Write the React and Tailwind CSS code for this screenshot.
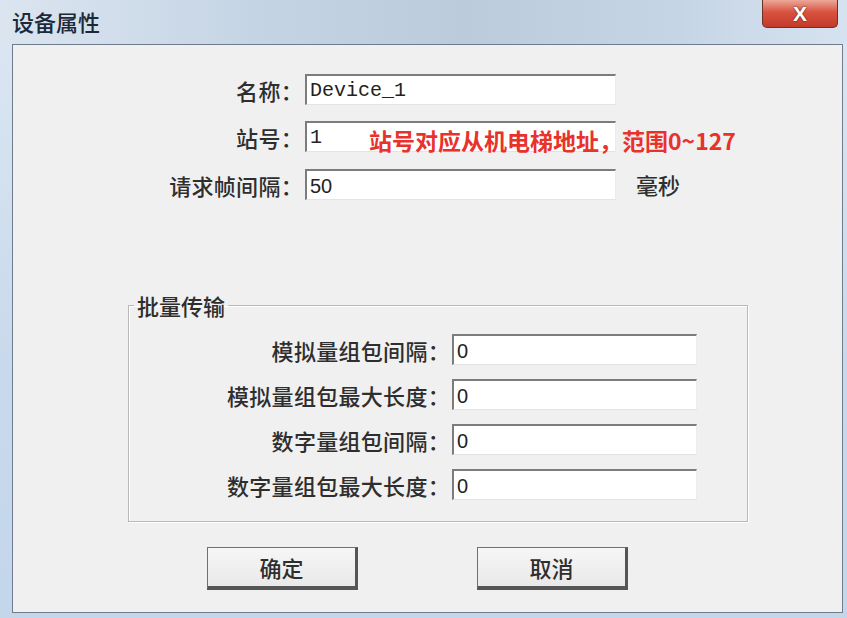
const cjk = { fontFamily: '"Noto Sans CJK SC", "Noto Sans", sans-serif' };

function Field({ value, mono, width = 'w-[311px]' }) {
  return (
    <div
      className={`${width} h-[31px] bg-white border-t-2 border-l-2 border-r border-b border-t-[#7c7c7c] border-l-[#7c7c7c] border-r-[#ececec] border-b-[#e4e4e4] flex items-center pl-[3px] pt-[2px] text-[20px] text-[#222]`}
      style={{ fontFamily: mono ? '"Liberation Mono", monospace' : '"Liberation Sans", sans-serif' }}
    >
      {value}
    </div>
  );
}

function Row({ label, labelWidth, children }) {
  return (
    <div className="flex items-center">
      <div className={`${labelWidth} text-right text-[22px] leading-[28px] tracking-[0.3px] text-[#2e2e2e] font-medium pr-[2px]`} style={cjk}>{label}</div>
      {children}
    </div>
  );
}

function Button({ children }) {
  return (
    <button
      className="w-[151px] h-[43px] bg-[linear-gradient(#f6f6f6,#e9e9e9)] border border-[#707070] border-r-[3px] border-b-[4px] border-r-[#555] border-b-[#555] text-[22px] font-medium text-[#2e2e2e]"
      style={cjk}
    >
      {children}
    </button>
  );
}

export default function App() {
  return (
    <div className="w-[847px] h-[618px] bg-[linear-gradient(180deg,#dce7f3,#c8d9eb_60%,#c4d6ea)] flex flex-col overflow-hidden">
      <div className="h-[44px] flex justify-between items-start pl-[12px] pr-[9px] bg-[linear-gradient(90deg,#dbe5f0,#c5d4e4_30%,#bccbdb_55%,#c6d5e6_80%,#d6e2ef)]">
        <div className="pt-[5px] text-[22px] text-[#1d2838] font-medium" style={cjk}>设备属性</div>
        <div
          className="w-[76px] h-[28px] rounded-b-[5px] border border-t-0 border-[#6b3328] bg-[linear-gradient(#eba898,#d9523f_45%,#c23a2a)] flex items-center justify-center text-white font-bold text-[21px] [text-shadow:0_0_2px_#5a1a10]"
          style={{ fontFamily: '"Liberation Sans", sans-serif' }}
        >
          X
        </div>
      </div>

      <div className="ml-[12px] mr-[4px] h-[569px] bg-[#f0f0f0] border border-[#6e7c8c] flex flex-col">
        <div className="pt-[29px] flex flex-col gap-[16px]">
          <Row label="名称：" labelWidth="w-[292px]">
            <Field value="Device_1" mono />
          </Row>
          <div className="relative">
            <Row label="站号：" labelWidth="w-[292px]">
              <Field value="1" mono />
            </Row>
            <div
              className="absolute left-[356px] top-[4px] text-[23px] leading-[30px] font-bold text-[#e8322c] whitespace-nowrap"
              style={cjk}
            >
              站号对应从机电梯地址，范围0~127
            </div>
          </div>
          <Row label="请求帧间隔：" labelWidth="w-[292px]">
            <Field value="50" />
            <span className="ml-[20px] text-[22px] font-medium text-[#2e2e2e]" style={cjk}>毫秒</span>
          </Row>
        </div>

        <fieldset className="ml-[115px] mt-[91px] w-[620px] h-[230px] border border-[#b8b8b8] shadow-[inset_1px_1px_0_#fff,1px_1px_0_#fff] flex flex-col gap-[14px] pt-[16px]">
          <legend className="ml-[5px] px-[3px] text-[22px] font-medium text-[#2e2e2e] leading-[26px]" style={cjk}>批量传输</legend>
          <Row label="模拟量组包间隔：" labelWidth="w-[323px]">
            <Field value="0" width="w-[245px]" />
          </Row>
          <Row label="模拟量组包最大长度：" labelWidth="w-[323px]">
            <Field value="0" width="w-[245px]" />
          </Row>
          <Row label="数字量组包间隔：" labelWidth="w-[323px]">
            <Field value="0" width="w-[245px]" />
          </Row>
          <Row label="数字量组包最大长度：" labelWidth="w-[323px]">
            <Field value="0" width="w-[245px]" />
          </Row>
        </fieldset>

        <div className="mt-[25px] flex pl-[194px] gap-[119px]">
          <Button>确定</Button>
          <Button>取消</Button>
        </div>
      </div>
    </div>
  );
}
